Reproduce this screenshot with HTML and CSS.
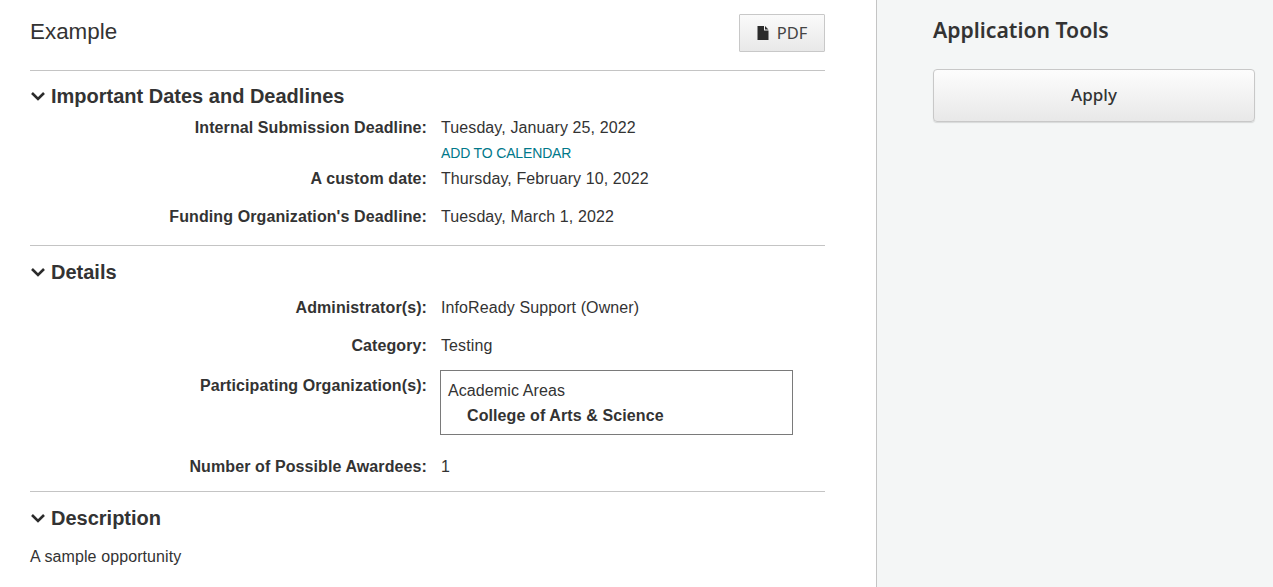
FILE: index.html
```html
<!DOCTYPE html>
<html lang="en">
<head>
<meta charset="utf-8">
<title>Example</title>
<link rel="stylesheet" href="styles.css">
</head>
<body>
<div class="page">
  <main class="main">
    <header class="top">
      <h1 class="title">Example</h1>
      <button class="pdf" type="button">
        <svg class="pdf-icon" width="12" height="14" viewBox="0 0 12 14"><path d="M0.5 0H7V4.5H11.5V14H0.5Z M8 0L11.5 3.5H8Z" fill="#2b2b2b"/></svg>
        PDF
      </button>
    </header>

    <section class="section dates">
      <h2 class="heading"><svg class="chevron" width="16" height="10" viewBox="0 0 16 10"><path d="M2 2L8 8L14 2" fill="none" stroke="#2b2b2b" stroke-width="2.6"/></svg>Important Dates and Deadlines</h2>
      <div class="rows rows-tight">
        <div class="row">
          <div class="label">Internal Submission Deadline:</div>
          <div class="value">Tuesday, January 25, 2022<a class="calendar" href="#">ADD TO CALENDAR</a></div>
        </div>
        <div class="row">
          <div class="label">A custom date:</div>
          <div class="value">Thursday, February 10, 2022</div>
        </div>
        <div class="row">
          <div class="label">Funding Organization's Deadline:</div>
          <div class="value">Tuesday, March 1, 2022</div>
        </div>
      </div>
    </section>

    <section class="section details">
      <h2 class="heading"><svg class="chevron" width="16" height="10" viewBox="0 0 16 10"><path d="M2 2L8 8L14 2" fill="none" stroke="#2b2b2b" stroke-width="2.6"/></svg>Details</h2>
      <div class="rows">
        <div class="row">
          <div class="label">Administrator(s):</div>
          <div class="value">InfoReady Support (Owner)</div>
        </div>
        <div class="row">
          <div class="label">Category:</div>
          <div class="value">Testing</div>
        </div>
        <div class="row row-boxed">
          <div class="label label-boxed">Participating Organization(s):</div>
          <div class="value">
            <div class="org-box">
              <div class="org-group">Academic Areas</div>
              <div class="org-name">College of Arts &amp; Science</div>
            </div>
          </div>
        </div>
        <div class="row">
          <div class="label">Number of Possible Awardees:</div>
          <div class="value">1</div>
        </div>
      </div>
    </section>

    <section class="section description">
      <h2 class="heading"><svg class="chevron" width="16" height="10" viewBox="0 0 16 10"><path d="M2 2L8 8L14 2" fill="none" stroke="#2b2b2b" stroke-width="2.6"/></svg>Description</h2>
      <p class="desc-text">A sample opportunity</p>
    </section>
  </main>

  <aside class="side">
    <h2 class="side-title">Application Tools</h2>
    <button class="apply" type="button">Apply</button>
  </aside>
</div>
</body>
</html>
```

FILE: styles.css
```css
* { box-sizing: border-box; }
html, body { margin: 0; height: 100%; overflow: hidden; }
body {
  font-family: "Liberation Sans", Arial, sans-serif;
  font-size: 16px;
  line-height: 22px;
  color: #333;
  background: #fff;
}
.page { display: flex; height: 587px; }
.main { width: 876px; padding: 14px 51px 0 30px; flex: none; }
.side {
  flex: 1;
  background: #f4f6f6;
  border-left: 1px solid #c4c4c4;
  padding: 14px 18px 0 56px;
  font-family: "Noto Sans", sans-serif;
}

.top {
  display: flex;
  justify-content: space-between;
  align-items: center;
  height: 38px;
  margin-bottom: 18px;
}
.title { margin: -2px 0 0; font-size: 22.4px; font-weight: 400; line-height: 36px; }
.pdf {
  display: flex;
  align-items: center;
  justify-content: center;
  gap: 8px;
  width: 86px;
  height: 38px;
  padding: 0 0 1px;
  border: 1px solid #c8c8c8;
  border-radius: 1px;
  background: linear-gradient(#fafafa, #e8e8e8);
  font-family: "Noto Sans", sans-serif;
  font-size: 16.5px;
  color: #444;
}
.pdf-icon { flex: none; }

.section { border-top: 1px solid #c4c4c4; padding-top: 10px; }
.dates { padding-bottom: 17px; }
.details { padding-top: 11px; padding-bottom: 13px; }
.description { padding-top: 11px; }

.heading {
  display: flex;
  align-items: center;
  gap: 5px;
  margin: 0;
  font-size: 20px;
  font-weight: 700;
  line-height: 30px;
}
.chevron { flex: none; }

.rows { display: flex; flex-direction: column; gap: 16px; margin-top: 10px; letter-spacing: 0.1px; }
.rows-tight { margin-top: 6px; }
.dates .row:first-child { margin-bottom: -11px; }
.row { display: flex; gap: 14px; }
.row-boxed { margin-top: -3px; margin-bottom: 5px; }
.label { width: 397px; flex: none; text-align: right; font-weight: 700; }
.label-boxed { padding-top: 5px; }
.value { flex: 1; }
.calendar {
  display: block;
  margin-top: 4px;
  font-size: 14px;
  line-height: 20px;
  letter-spacing: -0.15px;
  color: #00788a;
  text-decoration: none;
}
.org-box {
  width: 353px;
  height: 65px;
  margin-left: -1px;
  padding: 7px 7px;
  border: 1px solid #7a7a7a;
  line-height: 25px;
}
.org-name { padding-left: 19px; font-weight: 700; }
.desc-text { margin: 13px 0 0; letter-spacing: 0.1px; }

.side-title { margin: 0 0 23px; font-size: 21.2px; font-weight: 600; line-height: 32px; }
.apply {
  display: block;
  width: 322px;
  height: 53px;
  padding: 0 0 2px;
  border: 1px solid #c8c8c8;
  border-radius: 4px;
  background: linear-gradient(#fdfdfd, #e8e8e8);
  box-shadow: 0 1px 1px rgba(0, 0, 0, 0.12);
  font-family: "Noto Sans", sans-serif;
  font-size: 17px;
  font-weight: 500;
  color: #333;
}
```
